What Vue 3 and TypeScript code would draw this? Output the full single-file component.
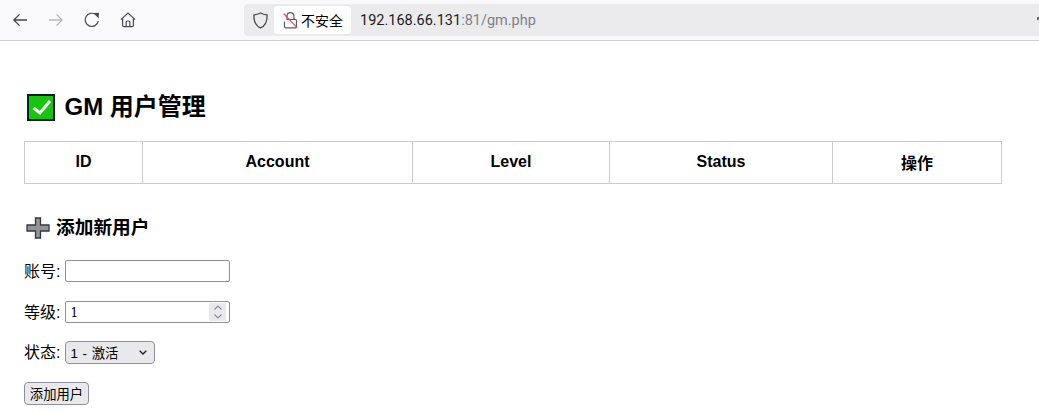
<script setup lang="ts">
const columns = [
  { label: "ID", width: 118 },
  { label: "Account", width: 270 },
  { label: "Level", width: 197 },
  { label: "Status", width: 223 },
  { label: "操作", width: 169 },
];
</script>

<template>
  <div class="browser">
    <header class="toolbar">
      <div class="nav">
        <button class="nav-btn" aria-label="back">
          <svg viewBox="0 0 16 16" width="16" height="16">
            <path d="M15 8H2M7.500 2.400 1.900 8l5.600 5.600" fill="none" stroke="#45444c" stroke-width="1.300" />
          </svg>
        </button>
        <button class="nav-btn" aria-label="forward">
          <svg viewBox="0 0 16 16" width="16" height="16">
            <path d="M1 8h13M8.500 2.400 14.100 8l-5.600 5.600" fill="none" stroke="#b6b6bb" stroke-width="1.300" />
          </svg>
        </button>
        <button class="nav-btn" aria-label="reload">
          <svg viewBox="0 0 16 16" width="16" height="16">
            <path d="M14.300 9.200A6.600 6.600 0 1 1 11.800 2.600" fill="none" stroke="#4b4a52" stroke-width="1.200" />
            <path d="M9.500 1 15 .8 14.700 6.500Z" fill="#4b4a52" />
          </svg>
        </button>
        <button class="nav-btn" aria-label="home">
          <svg viewBox="0 0 16 16" width="16" height="16">
            <path d="M.9 7.600 8 1l7.100 6.600M2.600 6.400v7.100c0 .7.500 1.100 1.100 1.100h8.600c.6 0 1.100-.4 1.100-1.100V6.400M6.200 14.500V10c0-.6.400-1 1-1h1.600c.6 0 1 .4 1 1v4.500" fill="none" stroke="#4b4a52" stroke-width="1.200" />
          </svg>
        </button>
      </div>
      <div class="urlbar">
        <svg class="shield" viewBox="0 0 16 16" width="17" height="17">
          <path d="M8 1c2 1.100 4 1.600 6.200 1.800.2 5.600-1.500 10-6.200 12.200C3.300 12.800 1.600 8.400 1.800 2.800 4 2.600 6 2.100 8 1Z" fill="none" stroke="#4b4a52" stroke-width="1.200" />
        </svg>
        <div class="security">
          <svg viewBox="0 0 15 17" width="15" height="17">
            <path d="M4 7.500V4.200a3.500 3.500 0 0 1 7 0v3.300M1.500 9.500v5.200c0 .7.400 1.100 1.100 1.100h9.800c.7 0 1.100-.4 1.100-1.100V8.600c0-.7-.4-1.100-1.100-1.100H3.600" fill="none" stroke="#5b5b66" stroke-width="1.200" />
            <path d="M.6 1.500 14.200 15.800" stroke="#e8476a" stroke-width="1.200" />
          </svg>
          <span>不安全</span>
        </div>
        <span class="url">192.168.66.131<span class="url-dim">:81/gm.php</span></span>
        <span class="url-edge"></span>
      </div>
    </header>

    <main class="page">
      <h2 class="title">
        <svg class="title-icon" viewBox="0 0 28 27" width="28" height="27">
          <rect x="1" y="1" width="26" height="25" fill="#16c60c" stroke="#0b1a33" stroke-width="2" />
          <path d="M6.500 14 13 19 23 7" fill="none" stroke="#fff" stroke-width="3" />
        </svg>
        GM 用户管理
      </h2>

      <table class="users">
        <colgroup>
          <col v-for="col in columns" :key="col.label" :style="{ width: col.width + 'px' }" />
        </colgroup>
        <thead>
          <tr>
            <th v-for="col in columns" :key="col.label">{{ col.label }}</th>
          </tr>
        </thead>
      </table>

      <h3 class="subtitle">
        <svg class="plus" viewBox="0 0 24 22" width="24" height="22">
          <path d="M9.500 1h5v7h8.500v6h-8.500v7h-5v-7H1V8h8.500Z" fill="#949494" stroke="#2c3a48" stroke-width="1.300" />
        </svg>
        添加新用户
      </h3>

      <form class="form" @submit.prevent>
        <p class="row">
          <label for="account">账号:</label>
          <input id="account" class="field" type="text" />
        </p>
        <p class="row">
          <label for="level">等级:</label>
          <span class="field number">
            <span class="number-value">1</span>
            <span class="spin">
              <svg viewBox="0 0 10 18" width="10" height="18">
                <path d="M1.500 6.500 5 3l3.500 3.500M1.500 11.500 5 15l3.500-3.500" fill="none" stroke="#8c8c92" stroke-width="1.100" />
              </svg>
            </span>
          </span>
        </p>
        <p class="row">
          <label for="status">状态:</label>
          <span id="status" class="select">
            <span>1 - 激活</span>
            <svg viewBox="0 0 8 5" width="8" height="5">
              <path d="M.7.7 4 4 7.300.7" fill="none" stroke="#222" stroke-width="1.400" />
            </svg>
          </span>
        </p>
        <button class="submit" type="submit">添加用户</button>
      </form>
    </main>
  </div>
</template>

<style>
html,
body {
  margin: 0;
  background: #fff;
  overflow: hidden;
}
</style>

<style scoped>
.browser {
  width: 1039px;
  height: 412px;
  overflow: hidden;
  font-family: "Liberation Sans", "Noto Sans CJK SC", sans-serif;
  color: #000;
}

.toolbar {
  height: 40px;
  display: flex;
  align-items: center;
  background: #f9f9fb;
  border-bottom: 1px solid #cfcfd2;
}

.nav {
  width: 244px;
  flex: none;
  display: flex;
  align-items: center;
  padding-left: 12px;
  box-sizing: border-box;
  gap: 20px;
}

.nav-btn {
  width: 16px;
  height: 16px;
  padding: 0;
  border: 0;
  background: none;
  display: block;
}

.nav-btn svg {
  display: block;
}

.urlbar {
  flex: 1;
  height: 32px;
  display: flex;
  align-items: center;
  background: #ebebee;
  border-radius: 4px 0 0 4px;
}

.shield {
  margin-left: 8px;
  flex: none;
}

.security {
  margin-left: 5px;
  height: 28px;
  padding: 0 8px 0 9px;
  display: flex;
  align-items: center;
  gap: 3px;
  background: #fff;
  border-radius: 4px;
  font-size: 14px;
}

.url {
  margin-left: 9px;
  font-family: "Roboto", "Liberation Sans", sans-serif;
  font-size: 14.5px;
  color: #1c1b22;
}

.url-dim {
  color: #80808a;
}

.url-edge {
  width: 2px;
  height: 3px;
  margin-left: auto;
  margin-bottom: 3px;
  background: #6a6a70;
}

.page {
  padding: 0 37px 0 24px;
}

.title {
  margin: 50px 0 18px 3px;
  display: flex;
  align-items: center;
  gap: 9.500px;
  font-size: 24px;
  line-height: 32px;
  font-weight: bold;
}

.title-icon {
  flex: none;
}

.users {
  width: 977px;
  table-layout: fixed;
  border-collapse: collapse;
}

.users th {
  height: 42px;
  padding: 0 0 2px;
  box-sizing: border-box;
  border: 1px solid #ccc;
  font-size: 16px;
  font-weight: bold;
  text-align: center;
}

.subtitle {
  margin: 30px 0 18px;
  display: flex;
  align-items: center;
  gap: 6px;
  font-size: 18.72px;
  line-height: 28px;
  font-weight: bold;
}

.plus {
  flex: none;
  margin-left: 2px;
}

.form {
  margin: 0;
}

.row {
  height: 22px;
  margin: 0 0 18.67px;
  display: flex;
  align-items: center;
  gap: 5px;
  font-size: 16px;
}

.row label {
  padding-bottom: 2px;
}

.field {
  width: 165px;
  height: 22px;
  padding: 0;
  box-sizing: border-box;
  border: 1px solid #8f8f9d;
  border-radius: 2px;
  background: #fff;
  display: block;
}

.number {
  display: flex;
  align-items: center;
  justify-content: space-between;
  padding: 0 3px 0 4px;
}

.number-value {
  padding-top: 2px;
  font-family: "DejaVu Serif", serif;
  font-size: 12px;
}

.spin {
  width: 17px;
  height: 18px;
  display: flex;
  align-items: center;
  justify-content: center;
  background: #e9e9ed;
}

.select {
  width: 90px;
  height: 23px;
  box-sizing: border-box;
  padding: 0 7px 0 4px;
  display: flex;
  align-items: center;
  justify-content: space-between;
  background: #e9e9ed;
  border: 1px solid #8f8f9d;
  border-radius: 4px;
  font-size: 13.33px;
  word-spacing: 1px;
}

.submit {
  width: 65px;
  height: 23px;
  padding: 0;
  display: block;
  font-family: inherit;
  font-size: 13.33px;
  color: #000;
  background: #e9e9ed;
  border: 1px solid #8f8f9d;
  border-radius: 4px;
}
</style>
